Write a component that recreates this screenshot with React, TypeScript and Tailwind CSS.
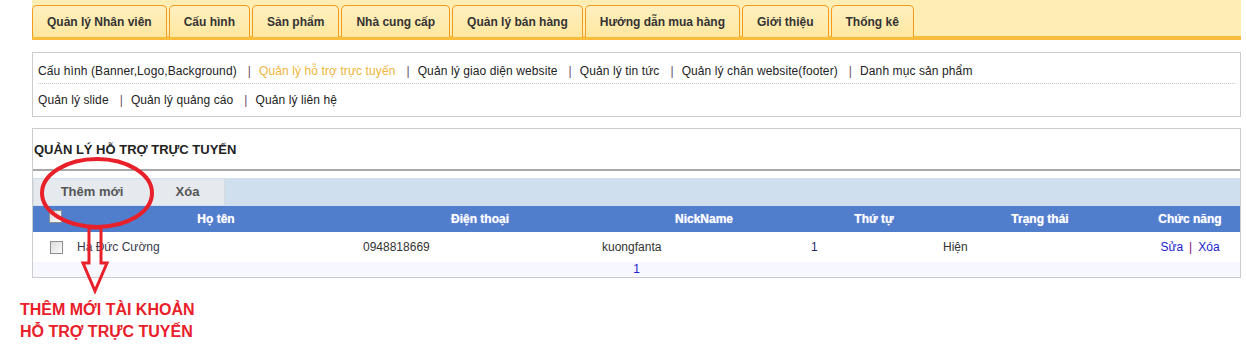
import React from 'react';

const topTabs = [
  'Quản lý Nhân viên',
  'Cấu hình',
  'Sản phẩm',
  'Nhà cung cấp',
  'Quản lý bán hàng',
  'Hướng dẫn mua hàng',
  'Giới thiệu',
  'Thống kê',
];

const navRow1 = [
  { label: 'Cấu hình (Banner,Logo,Background)' },
  { label: 'Quản lý hỗ trợ trực tuyến', active: true },
  { label: 'Quản lý giao diện website' },
  { label: 'Quản lý tin tức' },
  { label: 'Quản lý chân website(footer)' },
  { label: 'Danh mục sản phẩm' },
];

const navRow2 = [{ label: 'Quản lý slide' }, { label: 'Quản lý quảng cáo' }, { label: 'Quản lý liên hệ' }];

function NavRow({ items }: { items: { label: string; active?: boolean }[] }) {
  return (
    <div className="flex items-center text-[12px] tracking-[0.1px]">
      {items.map((it, i) => (
        <React.Fragment key={it.label}>
          {i > 0 && <span className="ml-[11px] mr-[8px] text-[#6a4a6a]">|</span>}
          <span className={it.active ? 'text-[#f0b43a]' : 'text-[#222]'}>{it.label}</span>
        </React.Fragment>
      ))}
    </div>
  );
}

function Checkbox() {
  return (
    <span className="inline-block w-[13px] h-[13px] border border-[#8e8f8f] bg-gradient-to-br from-[#dcdcdc] to-[#fbfbfb] align-middle" />
  );
}

export default function App() {
  return (
    <div className="relative w-[1246px] h-[347px] bg-white overflow-hidden font-['Liberation_Sans',Arial,sans-serif]">
      <div className="ml-[32px] w-[1209px]">
        {/* Top menu */}
        <div className="h-[40px] bg-[#ffeeb3] border-b-[4px] border-[#f9bd3d] pt-[5px] flex gap-[2px]">
          {topTabs.map((t) => (
            <div
              key={t}
              className="h-[32px] px-[14px] flex items-center rounded-t-[5px] border border-b-0 border-[#f39a1e] bg-gradient-to-b from-[#fff0c0] to-[#ffe7a0] text-[12px] font-bold text-[#333]"
            >
              {t}
            </div>
          ))}
        </div>

        {/* Sub nav */}
        <div className="mt-[12px] border border-[#cccccc] h-[65px] px-[5px] flex flex-col">
          <div className="h-[31px] flex items-center pt-[6px] border-b border-dotted border-[#c8c8c8]">
            <NavRow items={navRow1} />
          </div>
          <div className="flex-1 flex items-center">
            <NavRow items={navRow2} />
          </div>
        </div>

        {/* Support panel */}
        <div className="mt-[11px] border border-[#cccccc] border-b-2 h-[150px]">
          <div className="h-[42px] flex items-center pl-[1px] pt-[2px] border-b-2 border-[#a8a8a8] text-[13px] font-bold text-[#222]">
            QUẢN LÝ HỖ TRỢ TRỰC TUYẾN
          </div>
          <div className="mt-[7px] h-[28px] bg-[#cfdfee] flex pt-[1px] pl-[1px]">
            <div className="w-[117px] h-[26px] bg-[#e6e9ee] border-r border-[#d6dae0] flex items-center justify-center text-[13px] font-bold text-[#555]">
              Thêm mới
            </div>
            <div className="w-[74px] h-[26px] bg-[#e6e9ee] border-r border-[#d6dae0] flex items-center justify-center text-[13px] font-bold text-[#555]">
              Xóa
            </div>
          </div>
          <table className="w-full table-fixed border-collapse text-[12px]">
            <colgroup>
              <col className="w-[39px]" />
              <col className="w-[288px]" />
              <col className="w-[240px]" />
              <col className="w-[208px]" />
              <col className="w-[132px]" />
              <col className="w-[200px]" />
              <col />
            </colgroup>
            <thead>
              <tr className="h-[26px] bg-[#517dcd] text-white font-bold [text-shadow:0_0_1px_#c0d0ff]">
                <th className="text-right pr-[10px] align-top pt-[1px]">
                  <Checkbox />
                </th>
                <th>Họ tên</th>
                <th>Điện thoại</th>
                <th>NickName</th>
                <th>Thứ tự</th>
                <th>Trạng thái</th>
                <th>Chức năng</th>
              </tr>
            </thead>
            <tbody>
              <tr className="h-[30px] bg-white text-[#333]">
                <td className="text-right pr-[9px]">
                  <Checkbox />
                </td>
                <td className="pl-[5px] text-[#3a3a4a]">Hà Đức Cường</td>
                <td className="pl-[3px]">0948818669</td>
                <td className="pl-[2px]">kuongfanta</td>
                <td className="pl-[3px] text-[#2a2a6a]">1</td>
                <td className="pl-[3px]">Hiện</td>
                <td className="text-center">
                  <span className="text-[#2222cc]">Sửa</span>
                  <span className="mx-[6px] text-[#800080]">|</span>
                  <span className="text-[#2222cc]">Xóa</span>
                </td>
              </tr>
              <tr className="h-[15px] bg-[#f7f8ff]">
                <td colSpan={7} className="text-center leading-[15px] text-[#2020d0]">
                  1
                </td>
              </tr>
            </tbody>
          </table>
        </div>
      </div>

      {/* Red annotation */}
      <svg className="absolute left-0 top-0 pointer-events-none" width="1246" height="347">
        <ellipse cx="97" cy="193" rx="55" ry="34" fill="none" stroke="#e8202a" strokeWidth="4" />
        <path
          d="M89 228 L101 228 L101 263 L107 263 L95 291 L83 263 L89 263 Z"
          fill="none"
          stroke="#e8202a"
          strokeWidth="3"
          strokeLinejoin="miter"
        />
      </svg>
      <div className="absolute left-[20px] top-[299px] text-[16px] leading-[22px] font-bold text-[#e8202a]">
        <div>THÊM MỚI TÀI KHOẢN</div>
        <div>HỖ TRỢ TRỰC TUYẾN</div>
      </div>
    </div>
  );
}
